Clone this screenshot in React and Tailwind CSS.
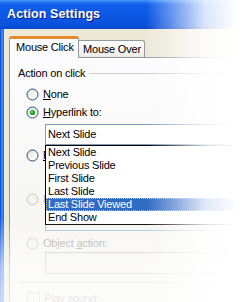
import React from "react";

const Radio = ({ checked = false, disabled = false }) => (
  <svg width="13" height="13" viewBox="0 0 13 13" className="shrink-0">
    <defs>
      <linearGradient id="rfill" x1="0" y1="0" x2="1" y2="1">
        <stop offset="0" stopColor="#DCDCD7" />
        <stop offset="0.5" stopColor="#F4F4F0" />
        <stop offset="1" stopColor="#FFFFFF" />
      </linearGradient>
    </defs>
    <circle
      cx="6.5"
      cy="6.5"
      r="5.5"
      fill={disabled ? "#F4F3EE" : "url(#rfill)"}
      stroke={disabled ? "#CAC8BB" : "#1C5180"}
      strokeWidth="1"
    />
    {checked && (
      <>
        <circle cx="6.5" cy="6.5" r="2.6" fill="#21A121" />
        <circle cx="6" cy="6" r="1" fill="#8CE58C" />
      </>
    )}
  </svg>
);

const items = ["Next Slide", "Previous Slide", "First Slide", "Last Slide", "Last Slide Viewed", "End Show"];

export default function App() {
  return (
    <div className="relative w-[244px] h-[302px] overflow-hidden bg-[#ECE9D8] flex flex-col font-['Liberation_Sans',Arial,sans-serif] text-[11px] tracking-[-0.2px] text-black leading-[13px]">
      {/* title bar */}
      <div className="h-[29px] shrink-0 flex items-center pl-[7px] bg-[linear-gradient(to_bottom,#4C9AFA_0px,#2A78F2_2px,#0F5DE8_5px,#0B57E4_60%,#0A50DA_90%,#0A47CC_100%)]">
        <span className="font-bold text-[12.5px] tracking-[0.1px] text-white [text-shadow:1px_1px_0_#0A1883]">
          Action Settings
        </span>
      </div>

      <div className="flex-1 flex">
        {/* left window frame */}
        <div className="w-[4px] shrink-0 bg-[linear-gradient(to_right,#0A3FC4,#2F7BF2,#3D86F5,#1B5EE0)]" />

        <div className="flex-1 pl-[5px] pt-[7px] flex flex-col">
          {/* tabs */}
          <div className="flex items-end h-[21px]">
            <div className="relative z-10 w-[70px] h-[22px] -mb-px bg-[#FCFCFE] border-x border-[#919B9C] rounded-t-[3px] border-t-[3px] border-t-[#E68B2C] pl-[6px] pt-[2px]">
              Mouse Click
            </div>
            <div className="w-[66px] h-[17px] bg-[linear-gradient(to_bottom,#FFFFFF,#ECEBE6)] border-t border-r border-[#919B9C] rounded-tr-[3px] pl-[4px] pt-[2px] whitespace-nowrap">
              Mouse Over
            </div>
          </div>

          {/* tab page */}
          <div className="relative flex-1 border-t border-l border-[#919B9C] bg-[linear-gradient(to_bottom,#FCFCFE,#F4F3EE)] pl-[8px] flex flex-col">
            <div className="mt-[9px] h-[13px] flex items-center">
              <span>Action on click</span>
              <div className="flex-1 ml-[4px] h-px bg-[#D0D0BF]" />
            </div>

            <div className="mt-[8px] ml-[8px] h-[13px] flex items-center gap-[4px]">
              <Radio />
              <span>
                <span className="underline">N</span>one
              </span>
            </div>

            <div className="mt-[5px] ml-[8px] h-[13px] flex items-center gap-[4px]">
              <Radio checked />
              <span>
                <span className="underline">H</span>yperlink to:
              </span>
            </div>

            <div className="mt-[5px] ml-[27px] w-[300px] h-[21px] border border-[#7F9DB9] bg-white flex items-center pl-[2px]">
              Next Slide
            </div>

            <div className="mt-[4px] ml-[8px] h-[13px] flex items-center gap-[4px]">
              <Radio />
              <span>
                <span className="underline">R</span>un program:
              </span>
            </div>
            <div className="mt-[4px] ml-[27px] w-[300px] h-[21px] border border-[#7F9DB9] bg-white" />

            <div className="mt-[6px] ml-[8px] h-[13px] flex items-center gap-[4px] text-[#ACA899]">
              <Radio disabled />
              <span>Run macro:</span>
            </div>
            <div className="mt-[4px] ml-[27px] w-[300px] h-[21px] border border-[#AFC4DA] bg-[#F4F3EE]" />

            <div className="mt-[6px] ml-[8px] h-[13px] flex items-center gap-[4px] text-[#ACA899]">
              <Radio disabled />
              <span>
                Object <span className="underline">a</span>ction:
              </span>
            </div>
            <div className="mt-[2px] ml-[27px] w-[300px] h-[22px] border border-[#C9C7BA] bg-[#F4F3EE]" />

            <div className="mt-[8px] h-px bg-[#D0D0BF]" />

            <div className="mt-[9px] ml-[9px] h-[13px] flex items-center gap-[4px] text-[#ACA899]">
              <div className="w-[13px] h-[13px] border border-[#CAC8BB] bg-[#F4F3EE]" />
              <span>Play sound:</span>
            </div>

            {/* open dropdown list */}
            <div className="absolute left-[35px] top-[87px] w-[300px] border border-black bg-white z-20">
              {items.map((t, i) =>
                i === 4 ? (
                  <div
                    key={t}
                    className="h-[13px] pl-[2px] bg-[#316AC5] text-white outline outline-1 outline-dotted outline-[#E4C36B] -outline-offset-1"
                  >
                    {t}
                  </div>
                ) : (
                  <div key={t} className="h-[13px] pl-[2px]">
                    {t}
                  </div>
                )
              )}
            </div>
          </div>
        </div>
      </div>

      {/* fade overlays */}
      <div className="pointer-events-none absolute inset-0 z-30 bg-[linear-gradient(to_right,rgba(255,255,255,0)_60%,rgba(255,255,255,0.85)_84%,#FFFFFF_97%)]" />
      <div className="pointer-events-none absolute inset-0 z-30 bg-[linear-gradient(to_bottom,rgba(255,255,255,0)_72%,rgba(255,255,255,0.6)_88%,rgba(255,255,255,0.75)_100%)]" />
    </div>
  );
}
